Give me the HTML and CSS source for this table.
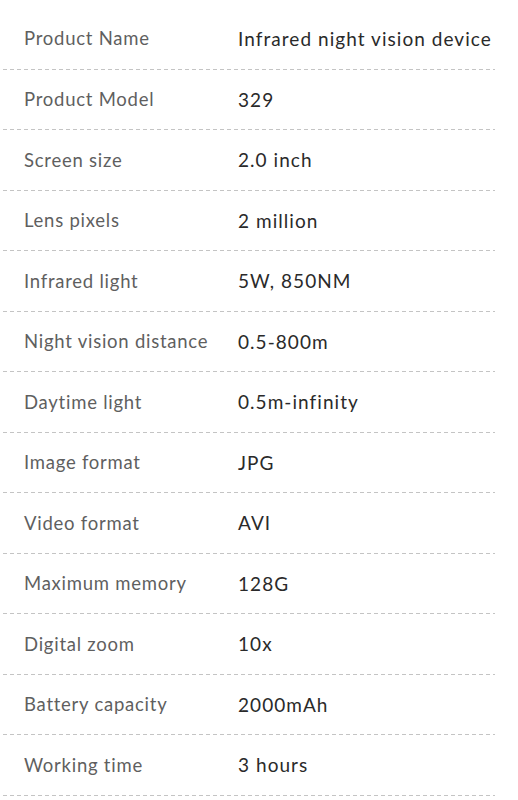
FILE: index.html
```html
<!DOCTYPE html>
<html>
<head>
<meta charset="utf-8">
<link rel="stylesheet" href="styles.css">
</head>
<body>
<div class="specs">
  <div class="row"><div class="label">Product Name</div><div class="value">Infrared night vision device</div></div>
  <div class="row"><div class="label">Product Model</div><div class="value">329</div></div>
  <div class="row"><div class="label">Screen size</div><div class="value">2.0 inch</div></div>
  <div class="row"><div class="label">Lens pixels</div><div class="value">2 million</div></div>
  <div class="row"><div class="label">Infrared light</div><div class="value">5W, 850NM</div></div>
  <div class="row"><div class="label">Night vision distance</div><div class="value">0.5-800m</div></div>
  <div class="row"><div class="label">Daytime light</div><div class="value">0.5m-infinity</div></div>
  <div class="row"><div class="label">Image format</div><div class="value">JPG</div></div>
  <div class="row"><div class="label">Video format</div><div class="value">AVI</div></div>
  <div class="row"><div class="label">Maximum memory</div><div class="value">128G</div></div>
  <div class="row"><div class="label">Digital zoom</div><div class="value">10x</div></div>
  <div class="row"><div class="label">Battery capacity</div><div class="value">2000mAh</div></div>
  <div class="row"><div class="label">Working time</div><div class="value">3 hours</div></div>
</div>
</body>
</html>
```
FILE: styles.css
```css
html, body {
  margin: 0;
  padding: 0;
  background: #ffffff;
}
body {
  font-family: "Lato", "Noto Sans", sans-serif;
  width: 518px;
  height: 800px;
  overflow: hidden;
}
.specs {
  padding: 8px 0 0 3px;
  width: 492px;
}
.row {
  display: flex;
  align-items: center;
  height: 59.5px;
  padding-bottom: 1px;
  background-image: repeating-linear-gradient(to right, #c4c4c4 0 4px, transparent 4px 7px);
  background-size: 100% 1px;
  background-position: 0 100%;
  background-repeat: no-repeat;
}
.row:first-child {
  height: 60.5px;
}
.label {
  width: 214px;
  flex: none;
  padding-left: 21px;
  font-size: 18.5px;
  letter-spacing: 0.75px;
  color: #5f5f5f;
  white-space: nowrap;
}
.value {
  font-size: 19px;
  letter-spacing: 1.05px;
  color: #2a2a2a;
  white-space: nowrap;
}
```
